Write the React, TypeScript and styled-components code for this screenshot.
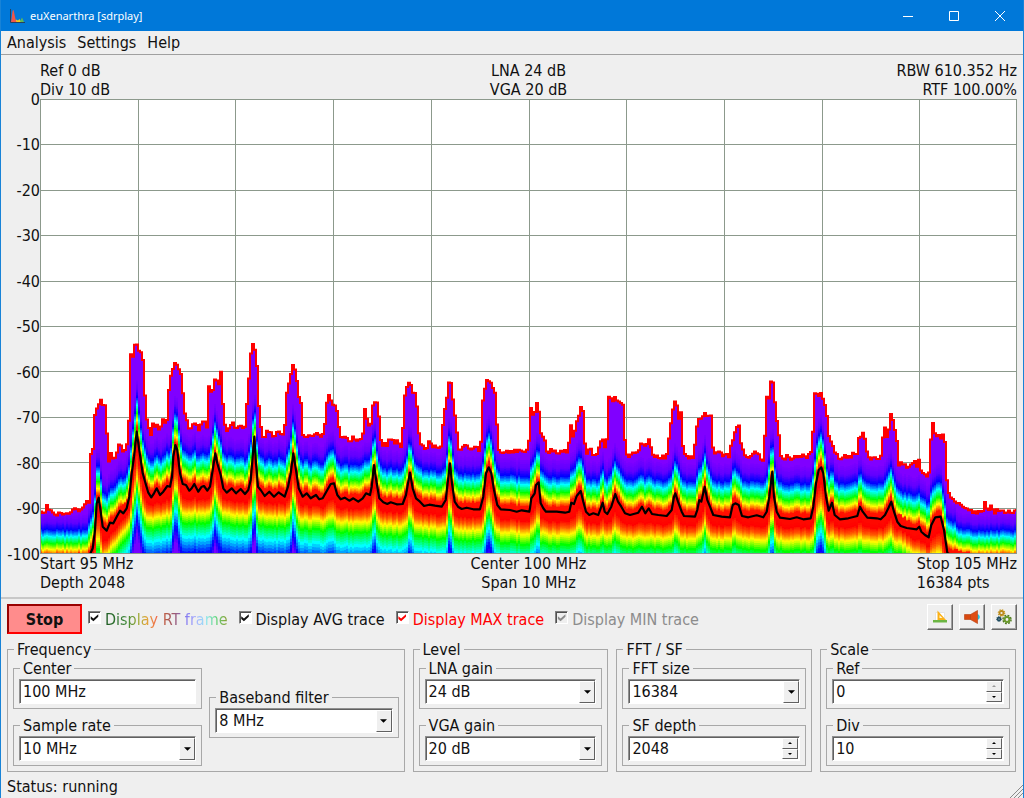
import React, { useId } from 'react';
import styled, { createGlobalStyle, css } from 'styled-components';

const GlobalStyle = createGlobalStyle`
  * { box-sizing: border-box; }
  html, body { margin: 0; padding: 0; background: #efefef; }
  body, button, input, select {
    font-family: 'DejaVu Sans Condensed', 'DejaVu Sans', 'Noto Sans', sans-serif;
    font-size: 16px;
    line-height: 19px;
    color: #111;
  }
`;

const AppWindow = styled.div`
  display: flex;
  flex-direction: column;
  min-height: 100vh;
  background: #efefef;
  border: 1px solid #1883d7;
  border-top: 0;
`;

const TitleBar = styled.header`
  display: flex;
  align-items: center;
  height: 31px;
  padding-left: 8px;
  background: #0078d9;
  color: #fff;
`;

const Title = styled.h1`
  flex: 1;
  margin: 0 0 0 5px;
  font-family: 'Noto Sans', 'Open Sans', sans-serif;
  font-size: 11px;
  line-height: 16px;
  font-weight: 400;
`;

const CaptionButton = styled.button`
  display: flex;
  align-items: center;
  justify-content: center;
  width: 46px;
  height: 31px;
  padding: 0;
  border: 0;
  background: transparent;
`;

const MenuBar = styled.nav`
  display: flex;
  gap: 11px;
  height: 24px;
  padding: 2px 6px;
  border-bottom: 1px solid #a0a0a0;
`;

const MenuItem = styled.button`
  padding: 0;
  border: 0;
  background: transparent;
`;

const Analyzer = styled.main`
  display: flex;
  flex: 1;
  flex-direction: column;
  padding: 6px 6px 5px 0;
  border-bottom: 2px solid #c8c8c8;
`;

const Readouts = styled.div`
  display: grid;
  grid-template-columns: 1fr 1fr 1fr;
  padding-left: 39px;
`;

const Readout = styled.p<{ $align?: 'left' | 'center' | 'right' }>`
  margin: 0;
  text-align: ${(p) => p.$align ?? 'left'};
  white-space: pre-line;
`;

const RightBlock = styled.div`
  justify-self: end;
`;

const PlotRow = styled.div`
  display: flex;
  flex: 1;
  min-height: 240px;
`;

const LevelAxis = styled.ul`
  display: flex;
  flex-direction: column;
  justify-content: space-between;
  width: 39px;
  margin: 0;
  padding: 0;
  list-style: none;
`;

const LevelTick = styled.li`
  display: flex;
  align-items: center;
  justify-content: flex-end;
  height: 0;
`;

const PlotSvg = styled.svg`
  flex: 1;
  width: 0;
  min-height: 0;
  background: #fff;
`;

const Toolbar = styled.div`
  display: flex;
  align-items: flex-start;
  gap: 6px;
  padding: 5px 6px 0;
`;

const StopButton = styled.button`
  width: 75px;
  height: 30px;
  padding: 0;
  border: 2px solid;
  border-color: #900 #f00 #f00 #900;
  background: #ff8c8c;
  font-weight: 700;
`;

const CheckList = styled.div`
  display: flex;
  flex: 1;
  gap: 11px;
  padding-top: 6px;
`;

const CheckLabel = styled.label<{ $color: string; $rainbow?: boolean }>`
  display: flex;
  gap: 4px;
  color: ${(p) => p.$color};
  white-space: nowrap;

  span {
    ${(p) =>
      p.$rainbow &&
      css`
        color: transparent;
        background: linear-gradient(90deg, #1d5a22 0, #3f8a3a 18%, #9aa830 27%, #e2a63a 34%, #f06a4a 42%,
          #b45c4a 50%, #9a5a78 57%, #8478f0 66%, #a8b0ff 74%, #96e6f4 82%, #62d880 90%, #84a63c 98%);
        background-clip: text;
        -webkit-background-clip: text;
      `}
  }
`;

const CheckBox = styled.input<{ $muted?: boolean }>`
  appearance: none;
  display: grid;
  place-items: center;
  width: 13px;
  height: 13px;
  margin: 1px 0 0;
  border: 1px solid;
  border-color: #808080 #fff #fff #808080;
  background: ${(p) => (p.$muted ? '#efefef' : '#fff')};
  box-shadow: inset 1px 1px #505050;
  color: inherit;

  &:checked::before {
    content: '';
    width: 9px;
    height: 8px;
    background: currentColor;
    clip-path: polygon(8% 35%, 38% 62%, 92% 8%, 92% 42%, 38% 96%, 8% 68%);
  }
`;

const ToolButtons = styled.div`
  display: flex;
  gap: 6px;
`;

const ToolButton = styled.button`
  display: flex;
  align-items: center;
  justify-content: center;
  width: 26px;
  height: 26px;
  padding: 0;
  border: 1px solid;
  border-color: #fff #696969 #696969 #fff;
  background: #efefef;
  box-shadow: inset -1px -1px #a0a0a0;
`;

const Panels = styled.div`
  display: grid;
  grid-template-columns: 398fr 196fr 196fr 196fr;
  gap: 8px;
  padding: 6px 7px 0 6px;
`;

const Group = styled.fieldset`
  min-width: 0;
  margin: 0;
  padding: 0 5px 5px;
  border: 1px solid #a8a8a8;

  & > legend {
    margin-left: 1px;
    padding: 0 3px;
  }
`;

const Stack = styled.div`
  display: grid;
  gap: 7px;
`;

const Columns = styled.div`
  display: grid;
  grid-template-columns: 1fr 1fr;
  align-items: center;
  gap: 7px;
`;

const Box = styled.fieldset`
  min-width: 0;
  margin: 0;
  padding: 1px 5px 4px;
  border: 1px solid #a8a8a8;

  & > legend {
    margin-left: 1px;
    padding: 0 3px;
  }
`;

const Well = styled.div`
  display: flex;
  position: relative;
  height: 25px;
  padding: 1px;
  border: 1px solid;
  border-color: #909090 #fff #fff #909090;
  background: #fff;
  box-shadow: inset 1px 1px #606060;
`;

const fieldText = css`
  appearance: none;
  flex: 1;
  min-width: 0;
  margin: 0;
  padding: 0 0 0 2px;
  border: 0;
  outline: 0;
  background: transparent;
`;

const TextInput = styled.input`
  ${fieldText}
`;

const Select = styled.select`
  ${fieldText}
`;

const raised = css`
  display: flex;
  align-items: center;
  justify-content: center;
  width: 16px;
  padding: 0;
  border: 1px solid;
  border-color: #fff #606060 #606060 #fff;
  background: #efefef;
`;

const DropArrow = styled.span`
  ${raised}
  position: absolute;
  top: 1px;
  right: 0;
  bottom: 0;
  pointer-events: none;
`;

const Steppers = styled.div`
  display: grid;
  grid-template-rows: 1fr 1fr;
`;

const StepButton = styled.button`
  ${raised}
`;

const StatusBar = styled.footer`
  display: flex;
  align-items: flex-end;
  justify-content: space-between;
  height: 26px;
  padding-left: 6px;
`;

const StatusText = styled.p`
  margin: 0;
  align-self: center;
  padding-top: 3px;
`;

/* Trace data: each run starts at a plot column and lists "dx,y" pairs in thirds of a plot unit. */
type Run = [number, string];
type Point = [number, number];

const MAX_RUNS: Run[] = [
  [-10, '28,538 36,545 44,550 50,530 55,528 60,542 70,548 85,552 92,543 100,552 110,546 120,545 130,540 140,535 150,548 158,535 165,520 178,512 182,380 190,350 192,270 200,235 206,218 212,210 218,230 224,212 230,290 236,400 240,365 250,390 258,380 265,350 270,340 278,365 285,360 292,345 298,260 302,75 308,90 314,50 322,37 328,60 334,65 340,90 344,180 348,250 355,290 362,320 368,285 380,285 390,300 400,270 410,285 418,170 425,130 432,103 440,108 448,120 456,140 462,240 470,270 480,305 490,280 497,275 505,300 515,280 525,278 532,290 536,165 542,180 547,195 553,150 560,145 566,165 574,118 580,240 588,305 595,295 605,275 610,280 618,300 630,290 640,295 648,285 652,195 658,130 664,60 672,40 680,90 686,210 692,290 700,325 710,305 718,300 728,325 740,305 748,300'],
  [240, '8,320 14,300 20,200 26,165 34,130 40,105 48,130 56,195 62,195 66,310 75,322 82,315 92,322 100,318 112,312 122,325 132,315 140,220 146,195 152,215 160,225 168,220 174,270 180,315 190,322 200,325 210,335 222,320 232,335 245,325 252,300 256,218 260,265 270,298 276,260 280,212 290,212 296,240 300,330 310,345 320,345 332,325 345,335 348,328 356,340 366,348 372,240 376,180 384,170 390,150 396,175 402,205 408,180 414,270 418,330 430,352 440,350 450,335 458,350 470,352 485,345 490,265 500,215 506,160 514,165 522,235 528,270 534,355 550,352 558,345 570,355 590,355 602,362 606,240 612,185 620,152 628,160 634,152 640,180 646,195 652,300 656,355 670,368 690,365 710,360 725,368 740,360 748,330'],
  [490, '2,240 6,240 12,265 18,220 24,212 30,290 36,330 42,310 48,355 58,368 66,358 78,370 95,368 102,358 112,370 118,330 124,283 130,325 138,290 145,265 152,230 160,240 164,340 170,370 182,360 190,375 205,365 210,330 220,330 228,368 234,290 236,202 244,210 250,215 256,198 262,210 270,225 278,208 284,310 288,370 300,380 312,368 325,370 335,328 342,355 350,350 358,320 364,365 375,378 395,380 410,382 416,330 424,275 432,215 438,203 446,270 454,240 460,370 475,380 490,385 498,320 504,258 510,275 518,255 526,245 534,270 542,242 548,350 552,380 560,365 570,370 580,378 598,378 606,320 612,330 618,295 628,285 634,350 642,370 650,378 662,382 672,368 685,375 700,390 706,300 710,200 716,210'],
  [730, '2,155 8,145 14,200 20,270 26,300 30,380 42,385 54,375 65,390 75,382 90,375 105,382 120,375 128,350 130,270 134,188 146,195 152,183 158,205 168,232 172,260 178,325 184,330 192,360 198,375 210,385 222,378 235,385 250,372 262,375 266,325 272,318 280,312 288,325 292,380 305,385 318,380 332,390 338,330 344,285 350,325 358,300 362,255 370,275 376,300 380,320 386,400 400,405 415,415 425,405 432,385 440,410 448,380 452,425 462,432 472,440 480,420 484,300 488,268 492,300 500,325 508,315 516,325 524,308 528,400 532,470 540,495 550,510 560,515 572,525 585,540 600,540 612,548 625,545 640,545 645,515 650,540 665,530 675,545 690,540 705,545 720,545 742,542'],
];

const AVG_RUNS: Run[] = [
  [-10, '28,690 160,690 175,684 182,668 188,655 195,600 200,520 206,503 212,545 218,590 230,602 240,578 250,580 260,560 270,542 280,550 290,535 298,500 305,430 312,380 320,305 328,360 338,430 348,465 355,488 364,502 372,490 380,475 390,495 400,485 412,468 420,470 426,440 430,380 436,345 442,360 450,430 458,462 468,465 478,482 485,475 493,462 505,485 515,470 522,468 532,482 540,470 548,420 556,370 562,400 572,435 580,475 590,488 605,475 618,490 632,477 645,492 655,480 662,450 668,380 673,320 678,400 684,470 692,480 704,498 718,485 732,500 746,487'],
  [240, '0,490 14,500 24,470 32,430 40,370 48,420 56,475 68,500 80,490 92,505 108,495 118,508 128,505 142,480 152,462 162,460 172,495 182,508 194,503 208,512 220,505 235,515 248,505 258,490 270,495 275,470 282,405 290,460 298,505 310,517 322,522 332,517 350,523 368,522 378,495 384,460 390,428 398,475 408,505 420,515 432,528 448,524 465,527 485,530 497,510 504,450 510,400 516,460 524,515 534,530 545,537 560,533 580,538 600,538 610,500 618,430 626,412 634,430 642,480 652,525 662,538 690,540 710,545 725,541 748,545'],
  [490, '0,535 4,505 14,490 18,465 26,457 32,520 40,535 48,545 80,545 105,548 118,545 124,518 132,522 140,498 152,483 160,515 168,545 178,555 190,550 205,555 212,535 218,518 224,545 232,552 244,530 256,492 264,515 274,530 285,550 300,555 325,548 336,530 346,550 356,535 366,552 385,555 410,558 425,540 432,500 436,490 444,515 455,545 462,558 495,560 502,540 508,510 514,515 524,470 532,510 540,530 550,555 575,560 600,562 608,525 616,520 626,525 636,558 655,562 680,556 700,562 710,545 718,500'],
  [730, '7,425 12,500 20,545 30,563 60,567 80,562 100,568 122,565 130,530 138,460 146,420 154,412 160,430 168,500 176,542 186,518 194,555 210,568 235,565 262,558 270,530 278,545 292,563 320,565 332,568 345,555 355,535 364,515 372,545 382,575 392,588 410,594 440,598 448,590 454,605 465,615 476,622 484,585 496,562 512,560 522,600 532,668 540,674 560,682 600,690 742,692'],
];

/* Noise floor beneath the average trace. */
const FLOOR: Point[] = [
  [0, 461], [46, 461], [54, 450], [66, 434], [80, 415], [92, 399], [112, 398], [160, 392], [220, 395], [290, 400],
  [350, 404], [410, 408], [490, 413], [600, 417], [720, 419], [860, 421], [870, 429], [892, 440], [908, 455],
  [930, 460], [977, 462],
];

const WIDTH = 977;
const HEIGHT = 455;
const STEP = 2;

const expand = (runs: Run[]): Point[] =>
  runs.flatMap(([start, text]) =>
    text.split(' ').map((pair): Point => {
      const [dx, y] = pair.split(',').map(Number);
      return [start + dx / 3, 231 + y / 3];
    }),
  );

const valueAt = (points: Point[], x: number): number => {
  if (x <= points[0][0]) return points[0][1];
  for (let i = 1; i < points.length; i += 1) {
    const [x1, y1] = points[i];
    if (x <= x1) {
      const [x0, y0] = points[i - 1];
      return y0 + ((y1 - y0) * (x - x0)) / (x1 - x0 || 1);
    }
  }
  return points[points.length - 1][1];
};

const jitter = (n: number): number => {
  const s = Math.sin(n * 127.1 + 11.7) * 43758.5453;
  return s - Math.floor(s) - 0.5;
};

const maxPoints = expand(MAX_RUNS);
const avgPoints = expand(AVG_RUNS);
const columns = Array.from({ length: Math.ceil(WIDTH / STEP) }, (_, i) => i * STEP);
const maxima = columns.map((x, i) => valueAt(maxPoints, x + 1) + jitter(i) * 4);
const averages = columns.map((x) => valueAt(avgPoints, x + 1));
const floors = columns.map((x) => valueAt(FLOOR, x + 1));

const stepPath = (ys: number[]): string =>
  ys.map((y, i) => `${i ? 'V' : 'M0 '}${y.toFixed(1)}H${(i + 1) * STEP}`).join('');

const maxPath = stepPath(maxima);
const areaPath = `${maxPath}V${HEIGHT}H0Z`;
const avgPath = `M${avgPoints.map(([x, y]) => `${x.toFixed(1)} ${y.toFixed(1)}`).join('L')}`;

/* Distance from the average trace, hue, and how strongly the contour follows a peak. */
const STOPS: [number, number, number][] = [
  [-54, 270, 1], [-44, 262, 1], [-36, 240, 1], [-28, 180, 1], [-20, 120, 1], [-13, 60, 1], [-6, 4, 1],
  [8, 0, 0.8], [15, 24, 0.7], [21, 58, 0.62], [31, 120, 0.62], [44, 180, 0.62], [60, 236, 0.64], [76, 268, 0.62],
];

const bands = STOPS.slice(1).flatMap(([off, hue, follow], i) => {
  const [off0, hue0, follow0] = STOPS[i];
  return Array.from({ length: 5 }, (_, k) => {
    const t = (k + 1) / 5;
    const o = off0 + (off - off0) * t;
    const f = follow0 + (follow - follow0) * t;
    const ys = columns.map((x, c) => {
      const noise = jitter(c + 900) * 3;
      if (o < -6) {
        const scale = x < 48 || x > 915 ? 0.86 : 1;
        return averages[c] + o * scale + noise;
      }
      const rise = Math.max(0, floors[c] - averages[c]);
      const shaped = rise * Math.min(1, 0.25 + rise / 50);
      const pull = Math.min(1, Math.max(0, (o + 6) / 20));
      return floors[c] + o - (rise * (1 - pull) + shaped * f * pull) + noise;
    });
    return { color: `hsl(${Math.round(hue0 + (hue - hue0) * t)} 100% 50%)`, d: `${stepPath(ys)}V${HEIGHT + 99}H0Z` };
  });
});

const LEVELS = ['0', '-10', '-20', '-30', '-40', '-50', '-60', '-70', '-80', '-90', '-100'];

function SpectrumPlot() {
  const clip = useId();
  return (
    <PlotSvg viewBox={`0 0 ${WIDTH} ${HEIGHT}`} preserveAspectRatio="none" role="img" aria-label="Spectrum">
      <clipPath id={clip}>
        <path d={areaPath} />
      </clipPath>
      <g stroke="#8c998c" shapeRendering="crispEdges">
        {LEVELS.slice(1, -1).map((l, i) => (
          <line key={l} x1="0" x2={WIDTH} y1={(i + 1) * 45.4 + 0.5} y2={(i + 1) * 45.4 + 0.5} />
        ))}
        {LEVELS.slice(1, -1).map((l, i) => (
          <line key={l} y1="0" y2={HEIGHT} x1={(i + 1) * 97.7 + 0.5} x2={(i + 1) * 97.7 + 0.5} />
        ))}
      </g>
      <g clipPath={`url(#${clip})`}>
        <path d={areaPath} fill="#8000ff" />
        {bands.map((b, i) => (
          <path key={i} d={b.d} fill={b.color} />
        ))}
      </g>
      <path d={maxPath} fill="none" stroke="#f00" strokeWidth="2" />
      <path d={avgPath} fill="none" stroke="#000" strokeWidth="2.2" strokeLinejoin="round" />
      <rect x="0.5" y="0.5" width={WIDTH - 1} height={HEIGHT - 1} fill="none" stroke="#8c998c" />
    </PlotSvg>
  );
}

function AppIcon() {
  return (
    <svg width="16" height="16" viewBox="0 0 16 16" aria-hidden="true">
      <path d="M9 14l1.500-3 1 1.500L13 9.500l2 4.500z" fill="#5cb85c" />
      <path d="M5.500 14l1.500-2.500 2 1L10.500 11l1 3z" fill="#f5c518" />
      <path d="M2 14C3 10 3.200 2 4.200 2S5.500 9 7.500 14z" fill="#f0564a" />
      <path d="M1.500 1v13.500H16" fill="none" stroke="#27415e" />
    </svg>
  );
}

function RulerIcon() {
  return (
    <svg width="16" height="16" viewBox="0 0 16 16" aria-hidden="true">
      <path d="M3.500 3.500h9v9h-9z" fill="#fff" stroke="#e4e4e4" />
      <path d="M5.500 1.500v9.500h8.500z" fill="#fbb117" />
      <path d="M7.500 6v3h3z" fill="#fff3cf" />
      <path d="M1 11h14v2.500H1z" fill="#6cb644" />
    </svg>
  );
}

function HornIcon() {
  return (
    <svg width="16" height="16" viewBox="0 0 16 16" aria-hidden="true">
      <path d="M13.500 5c3 1 3 5 0 6z" fill="#29c0dc" />
      <path d="M.5 5.500h6v5h-6z" fill="#d8480f" stroke="#b33a0a" strokeWidth=".6" />
      <path d="M6.500 5.500L13.500 1.500v13l-7-4z" fill="#e04e14" stroke="#b33a0a" strokeWidth=".6" />
    </svg>
  );
}

function GearsIcon() {
  return (
    <svg width="16" height="16" viewBox="0 0 16 16" fill="none" aria-hidden="true">
      <circle cx="5.500" cy="4" r="2" stroke="#b98a1d" strokeWidth="1.800" />
      <circle cx="5.500" cy="4" r="3.200" stroke="#c9971f" strokeWidth="1.200" strokeDasharray="1.400 1.110" />
      <circle cx="3" cy="10" r="1.400" stroke="#1d4a5e" strokeWidth="1.600" />
      <circle cx="3" cy="10" r="2.400" stroke="#1d4a5e" strokeWidth="1" strokeDasharray="1.100 .785" />
      <circle cx="11" cy="10.500" r="2.500" stroke="#6a9a2a" strokeWidth="2.200" />
      <circle cx="11" cy="10.500" r="4.100" stroke="#4d7a1c" strokeWidth="1.400" strokeDasharray="1.900 1.320" />
    </svg>
  );
}

function Triangle({ up, small, muted }: { up?: boolean; small?: boolean; muted?: boolean }) {
  const size = small ? 4 : 7;
  return (
    <svg width={size} height={small ? 2 : 4} viewBox="0 0 8 4" aria-hidden="true">
      <path d={up ? 'M0 4h8L4 0z' : 'M0 0h8L4 4z'} fill={muted ? '#999' : '#000'} />
    </svg>
  );
}

function Field({ label, children }: { label: string; children: (id: string) => React.ReactNode }) {
  const id = useId();
  return (
    <Box>
      <legend>
        <label htmlFor={id}>{label}</label>
      </legend>
      <Well>{children(id)}</Well>
    </Box>
  );
}

function TextField({ label, value }: { label: string; value: string }) {
  return <Field label={label}>{(id) => <TextInput id={id} defaultValue={value} />}</Field>;
}

function SelectField({ label, value }: { label: string; value: string }) {
  return (
    <Field label={label}>
      {(id) => (
        <>
          <Select id={id} defaultValue={value}>
            <option>{value}</option>
          </Select>
          <DropArrow>
            <Triangle />
          </DropArrow>
        </>
      )}
    </Field>
  );
}

function SpinField({ label, value, atMax }: { label: string; value: string; atMax?: boolean }) {
  return (
    <Field label={label}>
      {(id) => (
        <>
          <TextInput id={id} inputMode="numeric" defaultValue={value} />
          <Steppers>
            <StepButton type="button" aria-label={`Increase ${label}`} disabled={atMax}>
              <Triangle up small muted={atMax} />
            </StepButton>
            <StepButton type="button" aria-label={`Decrease ${label}`}>
              <Triangle small />
            </StepButton>
          </Steppers>
        </>
      )}
    </Field>
  );
}

export default function App() {
  return (
    <AppWindow>
      <GlobalStyle />
      <TitleBar>
        <AppIcon />
        <Title>euXenarthra [sdrplay]</Title>
        <CaptionButton aria-label="Minimize">
          <svg width="10" height="10" stroke="#fff"><path d="M0 5.500h10" /></svg>
        </CaptionButton>
        <CaptionButton aria-label="Maximize">
          <svg width="10" height="10" stroke="#fff" fill="none"><path d="M.5.500h9v9h-9z" /></svg>
        </CaptionButton>
        <CaptionButton aria-label="Close">
          <svg width="10" height="10" stroke="#fff"><path d="M0 0l10 10M10 0L0 10" /></svg>
        </CaptionButton>
      </TitleBar>
      <MenuBar>
        <MenuItem>Analysis</MenuItem>
        <MenuItem>Settings</MenuItem>
        <MenuItem>Help</MenuItem>
      </MenuBar>
      <Analyzer>
        <Readouts>
          <Readout>{'Ref 0 dB\nDiv 10 dB'}</Readout>
          <Readout $align="center">{'LNA 24 dB\nVGA 20 dB'}</Readout>
          <Readout $align="right">{'RBW 610.352 Hz\nRTF 100.00%'}</Readout>
        </Readouts>
        <PlotRow>
          <LevelAxis>
            {LEVELS.map((l) => (
              <LevelTick key={l}>{l}</LevelTick>
            ))}
          </LevelAxis>
          <SpectrumPlot />
        </PlotRow>
        <Readouts>
          <Readout>{'Start 95 MHz\nDepth 2048'}</Readout>
          <Readout $align="center">{'Center 100 MHz\nSpan 10 MHz'}</Readout>
          <RightBlock>
            <Readout>{'Stop 105 MHz\n16384 pts'}</Readout>
          </RightBlock>
        </Readouts>
      </Analyzer>
      <Toolbar>
        <StopButton>Stop</StopButton>
        <CheckList>
          <CheckLabel $color="#111" $rainbow>
            <CheckBox type="checkbox" defaultChecked />
            <span>Display RT frame</span>
          </CheckLabel>
          <CheckLabel $color="#111">
            <CheckBox type="checkbox" defaultChecked />
            <span>Display AVG trace</span>
          </CheckLabel>
          <CheckLabel $color="#f00">
            <CheckBox type="checkbox" defaultChecked />
            <span>Display MAX trace</span>
          </CheckLabel>
          <CheckLabel $color="#8c8c8c">
            <CheckBox type="checkbox" defaultChecked $muted />
            <span>Display MIN trace</span>
          </CheckLabel>
        </CheckList>
        <ToolButtons>
          <ToolButton aria-label="Calibration"><RulerIcon /></ToolButton>
          <ToolButton aria-label="Audio"><HornIcon /></ToolButton>
          <ToolButton aria-label="Configuration"><GearsIcon /></ToolButton>
        </ToolButtons>
      </Toolbar>
      <Panels>
        <Group>
          <legend>Frequency</legend>
          <Columns>
            <Stack>
              <TextField label="Center" value="100 MHz" />
              <SelectField label="Sample rate" value="10 MHz" />
            </Stack>
            <SelectField label="Baseband filter" value="8 MHz" />
          </Columns>
        </Group>
        <Group>
          <legend>Level</legend>
          <Stack>
            <SelectField label="LNA gain" value="24 dB" />
            <SelectField label="VGA gain" value="20 dB" />
          </Stack>
        </Group>
        <Group>
          <legend>FFT / SF</legend>
          <Stack>
            <SelectField label="FFT size" value="16384" />
            <SpinField label="SF depth" value="2048" />
          </Stack>
        </Group>
        <Group>
          <legend>Scale</legend>
          <Stack>
            <SpinField label="Ref" value="0" atMax />
            <SpinField label="Div" value="10" />
          </Stack>
        </Group>
      </Panels>
      <StatusBar>
        <StatusText>Status: running</StatusText>
        <svg width="14" height="14" stroke="#8a8a8a" aria-hidden="true">
          <path d="M1 14L14 1M5 14l9-9M9 14l5-5" />
        </svg>
      </StatusBar>
    </AppWindow>
  );
}
